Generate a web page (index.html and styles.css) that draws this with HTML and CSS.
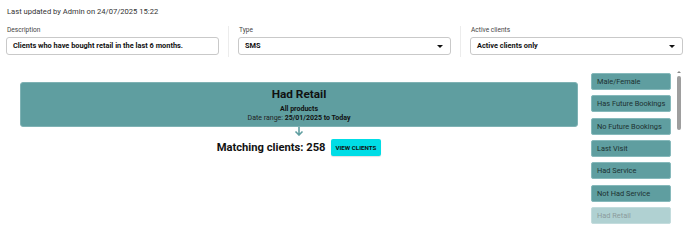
FILE: index.html
```html
<!DOCTYPE html>
<html>
<head>
<meta charset="utf-8">
<link rel="stylesheet" href="styles.css">
</head>
<body>
<div class="page">
  <div class="updated">Last updated by Admin on 24/07/2025 15:22</div>
  <div class="filters">
    <div class="field">
      <label class="label">Description</label>
      <div class="input">Clients who have bought retail in the last 6 months.</div>
    </div>
    <div class="divider"></div>
    <div class="field">
      <label class="label">Type</label>
      <div class="input select">SMS<span class="caret"></span></div>
    </div>
    <div class="divider"></div>
    <div class="field">
      <label class="label">Active clients</label>
      <div class="input select">Active clients only<span class="caret"></span></div>
    </div>
  </div>
  <div class="main">
    <div class="canvas">
      <div class="rule">
        <div class="rule-title">Had Retail</div>
        <div class="rule-sub">All products</div>
        <div class="rule-date">Date range: <b>25/01/2025 to Today</b></div>
      </div>
      <svg class="arrow" width="10" height="9" viewBox="0 0 10 9"><path d="M5 0 V7.5 M1.5 4.5 L5 8 L8.5 4.5" fill="none" stroke="#5f9ea0" stroke-width="1.6"/></svg>
      <div class="matching">
        <span class="matching-text">Matching clients: 258</span>
        <button class="view-btn">VIEW CLIENTS</button>
      </div>
    </div>
    <div class="sidebar">
      <div class="item">Male/Female</div>
      <div class="item">Has Future Bookings</div>
      <div class="item">No Future Bookings</div>
      <div class="item">Last Visit</div>
      <div class="item">Had Service</div>
      <div class="item">Not Had Service</div>
      <div class="item disabled">Had Retail</div>
    </div>
    <div class="scrollbar">
      <div class="scroll-up"></div>
      <div class="scroll-thumb"></div>
    </div>
  </div>
</div>
</body>
</html>
```
FILE: styles.css
```css
* { box-sizing: border-box; }
html, body { margin: 0; padding: 0; background: #fff; }
body { font-family: Roboto, "Liberation Sans", sans-serif; color: #222; }
.page { padding: 7px 5px 0 6px; width: 688px; height: 227px; overflow: hidden; }
.updated { font-size: 7.6px; line-height: 10px; padding-left: 1px; color: #333; }
.filters {
  display: grid;
  grid-template-columns: 1fr 1px 1fr 1px 1fr;
  column-gap: 9px;
  margin-top: 9px;
  align-items: stretch;
}
.field { display: flex; flex-direction: column; padding-bottom: 4px; }
.label { font-size: 6.6px; line-height: 8px; color: #444; padding-left: 1px; margin-bottom: 3px; }
.divider { background: #ececec; height: 31px; }
.input {
  height: 18px;
  border: 1px solid #c9c9c9;
  border-radius: 3px;
  font-size: 7.4px;
  font-weight: 700;
  line-height: 16px;
  padding: 0 6px;
  color: #111;
  position: relative;
  white-space: nowrap;
}
.caret {
  position: absolute;
  right: 7px;
  top: 7px;
  width: 0; height: 0;
  border-left: 3px solid transparent;
  border-right: 3px solid transparent;
  border-top: 3.5px solid #111;
}
.main { display: flex; margin-top: 10px; }
.canvas { margin-left: 14px; width: 558px; display: flex; flex-direction: column; align-items: center; padding-top: 13px; }
.rule {
  width: 558px;
  height: 45px;
  background: #5f9ea0;
  border-radius: 3px;
  border: 1px solid #7fb2b4;
  text-align: center;
  color: #111;
  padding-top: 4px;
}
.rule-title { font-size: 11.8px; font-weight: 700; line-height: 15px; }
.rule-sub { font-size: 7px; font-weight: 700; line-height: 9px; margin-top: 3px; }
.rule-date { font-size: 7px; line-height: 9px; color: #222; }
.rule-date b { color: #111; }
.arrow { display: block; }
.matching { display: flex; align-items: center; gap: 5px; margin-top: 3px; }
.matching-text { font-size: 11.2px; font-weight: 700; color: #111; }
.view-btn {
  background: #00dde6;
  border: none;
  border-radius: 2px;
  height: 17px;
  padding: 0 5px;
  font-family: Roboto, "Liberation Sans", sans-serif;
  font-size: 6.2px;
  font-weight: 700;
  color: #111;
  box-shadow: 0 1px 1px rgba(0,0,0,0.12);
}
.sidebar { margin-left: 13px; width: 80px; display: flex; flex-direction: column; gap: 5.33px; padding-top: 4px; }
.item {
  height: 17px;
  background: #5f9ea0;
  border: 1px solid #86b9bb;
  border-radius: 2px;
  font-size: 7.4px;
  line-height: 15px;
  padding-left: 5px;
  color: #1d3131;
  white-space: nowrap;
}
.item.disabled { background: #b0d1d2; border-color: #c3dcdd; color: #8c9c9c; }
.scrollbar { margin-left: 6px; width: 4px; padding-top: 2px; }
.scroll-up {
  width: 0; height: 0;
  border-left: 2px solid transparent;
  border-right: 2px solid transparent;
  border-bottom: 2.5px solid #888;
}
.scroll-thumb { margin-top: 3px; width: 4px; height: 54px; border-radius: 2px; background: #9e9e9e; }
```
